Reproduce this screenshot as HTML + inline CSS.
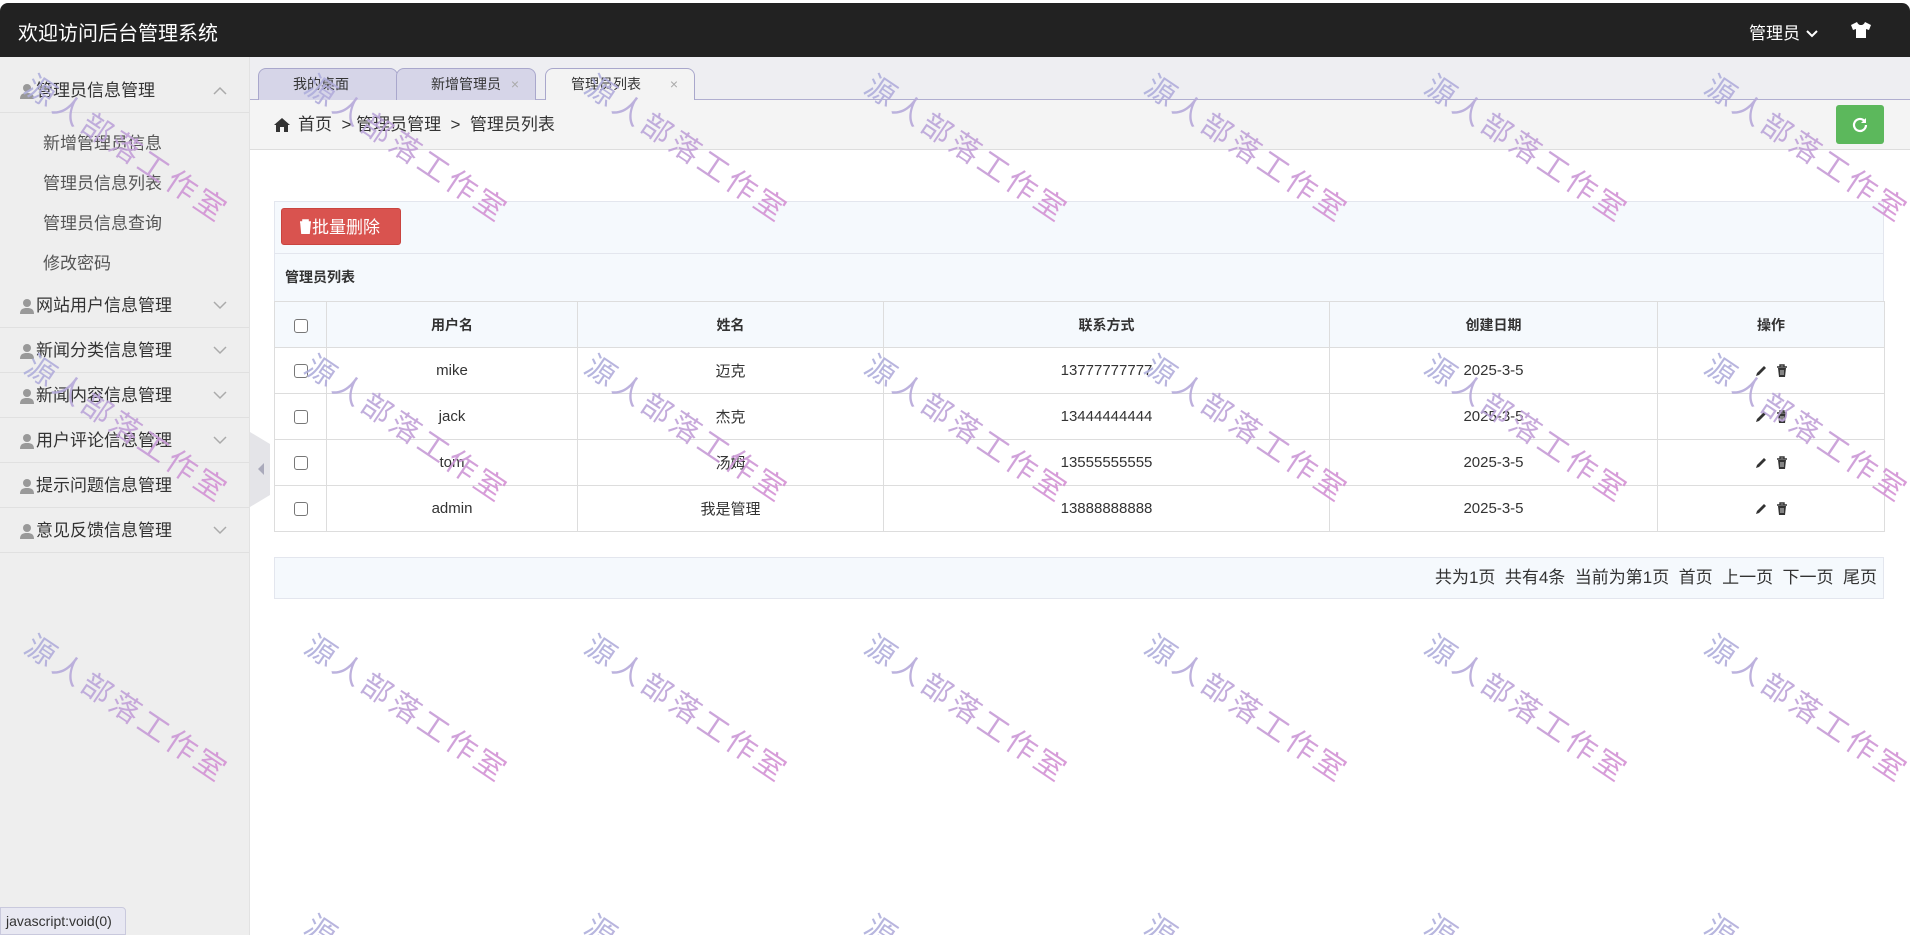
<!DOCTYPE html>
<html style="overflow:hidden"><head><meta charset="utf-8"><style>
*{box-sizing:border-box;margin:0;padding:0}
html,body{width:1910px;height:935px;overflow:hidden}
body{background:#fff;font-family:"Liberation Sans","Noto Sans CJK SC",sans-serif;color:#333;position:relative}
#root{position:absolute;left:0;top:0;width:1910px;height:935px;overflow:hidden}
.hdr{position:absolute;left:0;top:3px;width:1910px;height:54px;background:#222;border-radius:8px 8px 0 0;color:#fff}
.hdr .t{position:absolute;left:18px;top:14px;font-size:20px}
.hdr .u{position:absolute;left:1749px;top:16px;font-size:17px}
.side{position:absolute;left:0;top:57px;width:250px;height:878px;background:#eee;border-right:1px solid #e2e2e2}
.g{position:absolute;left:0;width:249px;height:45px;border-bottom:1px solid #e0e0e0;font-size:17px;line-height:45px;padding-left:36px;color:#333}
.g svg.p{position:absolute;left:20px;top:15px}
.g svg.c{position:absolute;left:213px;top:18px}
.s{position:absolute;left:43px;font-size:17px;color:#555}
.tabs{position:absolute;left:250px;top:57px;width:1660px;height:43px;background:#eeeef2;border-bottom:1px solid #b0aed0}
.tab{position:absolute;top:11px;height:32px;border:1px solid #a9a7cc;border-bottom:none;border-radius:8px 8px 0 0;background:#d6d5e8;font-size:14px;line-height:30px;color:#333;padding-left:34px}
.tab.a{background:#f3f3f3;height:33px}
.tab i{position:absolute;right:16px;top:0;font-style:normal;color:#aaa;font-size:14px}
.bc{position:absolute;left:250px;top:100px;width:1660px;height:50px;background:#f4f4f4;border-bottom:1px solid #ddd;font-size:17px;line-height:50px;padding-left:48px}
.ref{position:absolute;left:1836px;top:105px;width:48px;height:39px;background:#5cb85c;border-radius:3px}
.box{position:absolute;left:274px;border:1px solid #e3e6ee;background:#f5f9fd}
.btn{position:absolute;left:281px;top:208px;width:120px;height:37px;background:#d9534f;border-radius:3px;color:#fff;font-size:17px;line-height:37px;padding-left:17px;border:1px solid #c9443f}
table{position:absolute;left:274px;top:301px;border-collapse:collapse;font-size:15px}
td,th{border:1px solid #ddd;height:46px;text-align:center;color:#333}
th{background:#f5f9fd;font-weight:bold;font-size:14px}
td{background:#fff}
.cb{display:inline-block;width:14px;height:14px;border:1px solid #777;border-radius:3px;vertical-align:middle;background:#fff}
.wm{position:absolute;font-size:30px;letter-spacing:4px;transform-origin:0 0;transform:rotate(34deg);white-space:nowrap;background:linear-gradient(90deg,#aeb0dc,#d690d4);-webkit-background-clip:text;background-clip:text;color:transparent;opacity:.9;pointer-events:none;z-index:5;font-family:"Noto Sans CJK SC",sans-serif}
.st{position:absolute;left:0;top:907px;width:126px;height:28px;background:#e8e8f2;border:1px solid #c9c9dd;border-radius:0 4px 0 0;font-size:14px;line-height:26px;padding-left:5px;color:#333;z-index:6}
</style></head><body><div id="root">
<div class="hdr"><div class="t">欢迎访问后台管理系统</div><div class="u">管理员 <svg width="14" height="10" viewBox="0 0 14 10"><path d="M2 2l5 5 5-5" stroke="#fff" stroke-width="2" fill="none"/></svg></div>
<svg style="position:absolute;left:1850px;top:18px" width="22" height="18" viewBox="0 0 22 18"><path d="M7 1L1 4l2 5 3-1v9h10V8l3 1 2-5-6-3c-1 2-2 3-4 3S8 3 7 1z" fill="#fff"/></svg></div>
<div class="side">
<div class="g" style="top:11px">管理员信息管理<svg class="p" width="14" height="16" viewBox="0 0 14 16"><circle cx="7" cy="5" r="4" fill="#999"/><path d="M0 16c0-5 3-6 7-6s7 1 7 6z" fill="#999"/></svg><svg class="c" width="14" height="9" viewBox="0 0 14 9"><path d="M1 8l6-6 6 6" stroke="#aaa" stroke-width="1.5" fill="none"/></svg></div>
<div class="s" style="top:72px">新增管理员信息</div>
<div class="s" style="top:112px">管理员信息列表</div>
<div class="s" style="top:152px">管理员信息查询</div>
<div class="s" style="top:192px">修改密码</div>
<div class="g" style="top:226px">网站用户信息管理<svg class="p" width="14" height="16" viewBox="0 0 14 16"><circle cx="7" cy="5" r="4" fill="#999"/><path d="M0 16c0-5 3-6 7-6s7 1 7 6z" fill="#999"/></svg><svg class="c" width="14" height="9" viewBox="0 0 14 9"><path d="M1 1l6 6 6-6" stroke="#aaa" stroke-width="1.5" fill="none"/></svg></div>
<div class="g" style="top:271px">新闻分类信息管理<svg class="p" width="14" height="16" viewBox="0 0 14 16"><circle cx="7" cy="5" r="4" fill="#999"/><path d="M0 16c0-5 3-6 7-6s7 1 7 6z" fill="#999"/></svg><svg class="c" width="14" height="9" viewBox="0 0 14 9"><path d="M1 1l6 6 6-6" stroke="#aaa" stroke-width="1.5" fill="none"/></svg></div>
<div class="g" style="top:316px">新闻内容信息管理<svg class="p" width="14" height="16" viewBox="0 0 14 16"><circle cx="7" cy="5" r="4" fill="#999"/><path d="M0 16c0-5 3-6 7-6s7 1 7 6z" fill="#999"/></svg><svg class="c" width="14" height="9" viewBox="0 0 14 9"><path d="M1 1l6 6 6-6" stroke="#aaa" stroke-width="1.5" fill="none"/></svg></div>
<div class="g" style="top:361px">用户评论信息管理<svg class="p" width="14" height="16" viewBox="0 0 14 16"><circle cx="7" cy="5" r="4" fill="#999"/><path d="M0 16c0-5 3-6 7-6s7 1 7 6z" fill="#999"/></svg><svg class="c" width="14" height="9" viewBox="0 0 14 9"><path d="M1 1l6 6 6-6" stroke="#aaa" stroke-width="1.5" fill="none"/></svg></div>
<div class="g" style="top:406px">提示问题信息管理<svg class="p" width="14" height="16" viewBox="0 0 14 16"><circle cx="7" cy="5" r="4" fill="#999"/><path d="M0 16c0-5 3-6 7-6s7 1 7 6z" fill="#999"/></svg></div>
<div class="g" style="top:451px">意见反馈信息管理<svg class="p" width="14" height="16" viewBox="0 0 14 16"><circle cx="7" cy="5" r="4" fill="#999"/><path d="M0 16c0-5 3-6 7-6s7 1 7 6z" fill="#999"/></svg><svg class="c" width="14" height="9" viewBox="0 0 14 9"><path d="M1 1l6 6 6-6" stroke="#aaa" stroke-width="1.5" fill="none"/></svg></div>
</div>
<svg style="position:absolute;left:250px;top:432px" width="22" height="75" viewBox="0 0 22 75"><path d="M0 0l20 12v51L0 75z" fill="#e4e4e8"/><path d="M14 31l-6 6 6 6z" fill="#aab"/></svg>
<div class="tabs">
<div class="tab" style="left:8px;width:140px">我的桌面</div>
<div class="tab" style="left:146px;width:140px">新增管理员<i>×</i></div>
<div class="tab a" style="left:295px;width:150px;padding-left:25px">管理员列表<i>×</i></div>
</div>
<div class="bc"><svg style="position:absolute;left:24px;top:18px" width="16" height="14" viewBox="0 0 16 14"><path d="M8 0L0 7h2v7h4V9h4v5h4V7h2z" fill="#333"/></svg>首页 &nbsp;&gt; 管理员管理 &nbsp;&gt; &nbsp;管理员列表</div>
<div class="ref"><svg style="position:absolute;left:15px;top:11px" width="18" height="18" viewBox="0 0 18 18"><path d="M15 9a6 6 0 1 1-2-4.5" stroke="#fff" stroke-width="2.2" fill="none"/><path d="M15 2v5h-5z" fill="#fff"/></svg></div>
<div class="box" style="top:201px;width:1610px;height:53px"></div>
<div class="btn"><svg width="13" height="15" viewBox="0 0 13 15" style="vertical-align:-1px"><path d="M1 3h11M4 3V1h5v2M2 4h9l-1 11H3z" stroke="#fff" stroke-width="1.6" fill="#fff"/></svg>批量删除</div>
<div class="box" style="top:253px;width:1610px;height:49px;font-size:14px;font-weight:bold;line-height:47px;padding-left:10px;color:#333">管理员列表</div>
<table>
<tr><th style="width:52px"><span class="cb"></span></th><th style="width:251px">用户名</th><th style="width:306px">姓名</th><th style="width:446px">联系方式</th><th style="width:328px">创建日期</th><th style="width:227px">操作</th></tr>
<tr><td><span class="cb"></span></td><td>mike</td><td>迈克</td><td>13777777777</td><td>2025-3-5</td><td class="op"></td></tr>
<tr><td><span class="cb"></span></td><td>jack</td><td>杰克</td><td>13444444444</td><td>2025-3-5</td><td class="op"></td></tr>
<tr><td><span class="cb"></span></td><td>tom</td><td>汤姆</td><td>13555555555</td><td>2025-3-5</td><td class="op"></td></tr>
<tr><td><span class="cb"></span></td><td>admin</td><td>我是管理</td><td>13888888888</td><td>2025-3-5</td><td class="op"></td></tr>
</table>
<div class="box" style="top:557px;width:1610px;height:42px;font-size:17px;line-height:40px;text-align:right;padding-right:6px">共为1页 &nbsp;共有4条 &nbsp;当前为第1页 &nbsp;首页 &nbsp;上一页 &nbsp;下一页 &nbsp;尾页</div>
<div id="w"></div>
<div class="st">javascript:void(0)</div>
</div>
<script>
var h='';for(var j=0;j<4;j++)for(var i=0;i<7;i++){h+='<div class="wm" style="left:'+(42+280*i)+'px;top:'+(62+280*j)+'px">源人部落工作室</div>';}
document.getElementById('w').innerHTML=h;
var ic='<svg width="14" height="14" viewBox="0 0 14 14" style="vertical-align:middle"><path d="M2 12l1-3 7-7 2 2-7 7z" fill="#333"/></svg>&nbsp;&nbsp;<svg width="12" height="14" viewBox="0 0 12 14" style="vertical-align:middle"><path d="M1 3h10M4 3V1h4v2" stroke="#333" stroke-width="1.4" fill="none"/><path d="M2 4h8l-1 9H3z" fill="#333"/><path d="M5 6v5M7 6v5" stroke="#fff" stroke-width=".8"/></svg>';
document.querySelectorAll('.op').forEach(function(e){e.innerHTML=ic;});
</script>
</body></html>
